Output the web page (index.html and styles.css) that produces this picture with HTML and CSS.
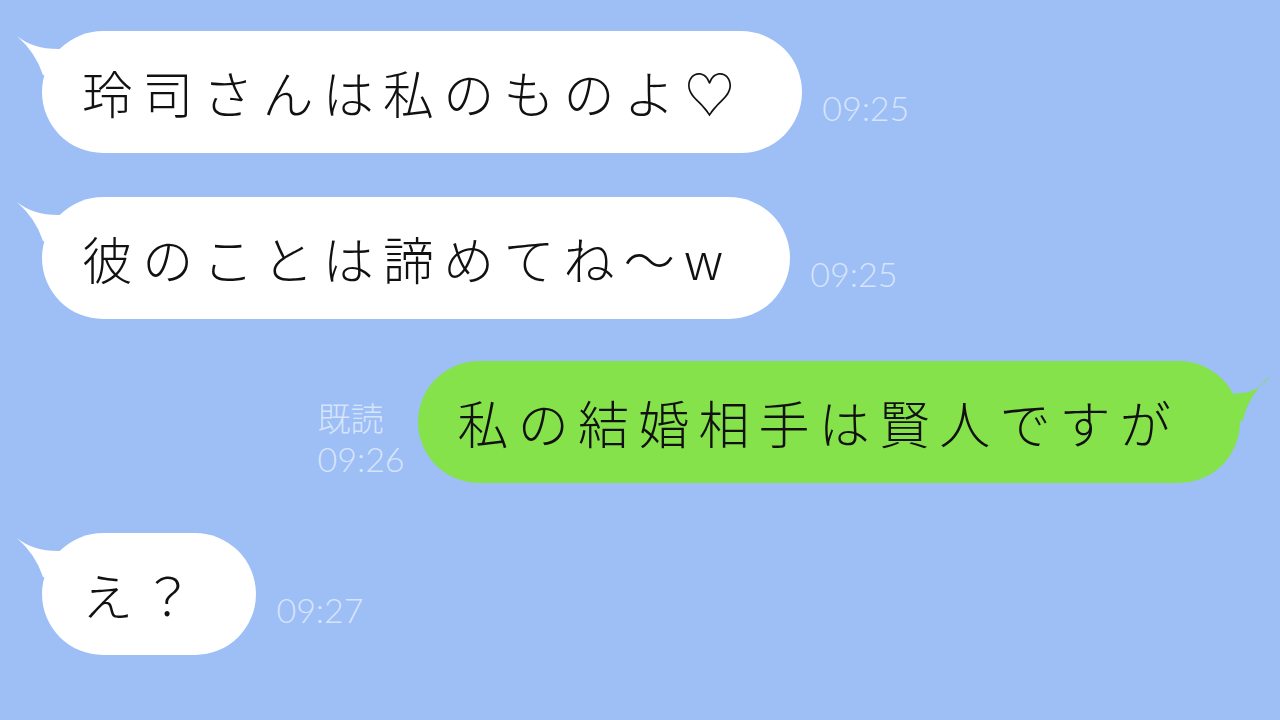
FILE: index.html
```html
<!DOCTYPE html>
<html lang="ja">
  <head>
    <meta charset="UTF-8" />
    <meta name="viewport" content="width=device-width, initial-scale=1.0" />
    <title>Chat</title>
    <link rel="stylesheet" href="styles.css">
  </head>
  <body>
    <main class="chat">
      <!-- incoming -->
      <div class="row row-in first">
        <div class="bubble bubble-in">
          <svg class="tail tail-in" viewBox="0 0 60 60" width="60" height="60">
            <path d="M5 5 Q22 19 50 18 L52 50 L31 44 Q24 22 5 5 Z" />
          </svg>
          玲司さんは私のものよ♡
        </div>
        <span class="time">09:25</span>
      </div>

      <div class="row row-in second">
        <div class="bubble bubble-in">
          <svg class="tail tail-in" viewBox="0 0 60 60" width="60" height="60">
            <path d="M5 5 Q22 19 50 18 L52 50 L31 44 Q24 22 5 5 Z" />
          </svg>
          彼のことは諦めてね〜w
        </div>
        <span class="time">09:25</span>
      </div>

      <!-- outgoing -->
      <div class="row row-out third">
        <div class="meta">
          <span class="read">既読</span>
          <span class="time">09:26</span>
        </div>
        <div class="bubble bubble-out">
          <svg class="tail tail-out" viewBox="0 0 60 70" width="60" height="70">
            <path d="M58 14 Q44 34 22 32 L10 60 L30 60 Q34 36 58 14 Z" />
          </svg>
          私の結婚相手は賢人ですが
        </div>
      </div>

      <div class="row row-in fourth">
        <div class="bubble bubble-in short">
          <svg class="tail tail-in" viewBox="0 0 60 60" width="60" height="60">
            <path d="M5 5 Q22 19 50 18 L52 50 L31 44 Q24 22 5 5 Z" />
          </svg>
          え？
        </div>
        <span class="time">09:27</span>
      </div>
    </main>
  </body>
</html>
```

FILE: styles.css
```css
* {
  margin: 0;
  padding: 0;
  box-sizing: border-box;
}

body {
  width: 1280px;
  height: 720px;
  overflow: hidden;
  background: #9dbff6;
  font-family: "Noto Sans CJK JP", "Noto Sans", sans-serif;
}

.chat {
  display: flex;
  flex-direction: column;
}

.row {
  display: flex;
  align-items: flex-end;
}

.row-in {
  padding-left: 42px;
}

.row-out {
  justify-content: flex-end;
  padding-right: 40px;
}

.first {
  margin-top: 31px;
}

.second {
  margin-top: 44px;
}

.third {
  margin-top: 42px;
}

.fourth {
  margin-top: 50px;
}

.bubble {
  position: relative;
  height: 122px;
  border-radius: 61px;
  display: flex;
  align-items: center;
  padding: 0 58px 0 40px;
  font-size: 51px;
  font-weight: 300;
  letter-spacing: 9.2px;
  color: #111;
  white-space: nowrap;
}

.bubble-in {
  background: #ffffff;
}

.bubble-in.short {
  padding-right: 54px;
}

.bubble-out {
  background: #85e24a;
  padding-right: 60px;
}

.tail {
  position: absolute;
}

.tail-in {
  left: -30px;
  top: 0;
  fill: #ffffff;
}

.tail-out {
  right: -33px;
  top: 0;
  fill: #85e24a;
}

.time {
  font-family: "Lato", "Liberation Sans", sans-serif;
  font-weight: 300;
  font-size: 34px;
  line-height: 36px;
  color: rgba(255, 255, 255, 0.6);
}

.row-in .time {
  margin-left: 20px;
  margin-bottom: 27px;
}

.meta {
  display: flex;
  flex-direction: column;
  gap: 6px;
  margin-right: 13px;
  margin-bottom: 6px;
}

.read {
  font-size: 33px;
  font-weight: 300;
  line-height: 36px;
  color: rgba(255, 255, 255, 0.6);
}
```
